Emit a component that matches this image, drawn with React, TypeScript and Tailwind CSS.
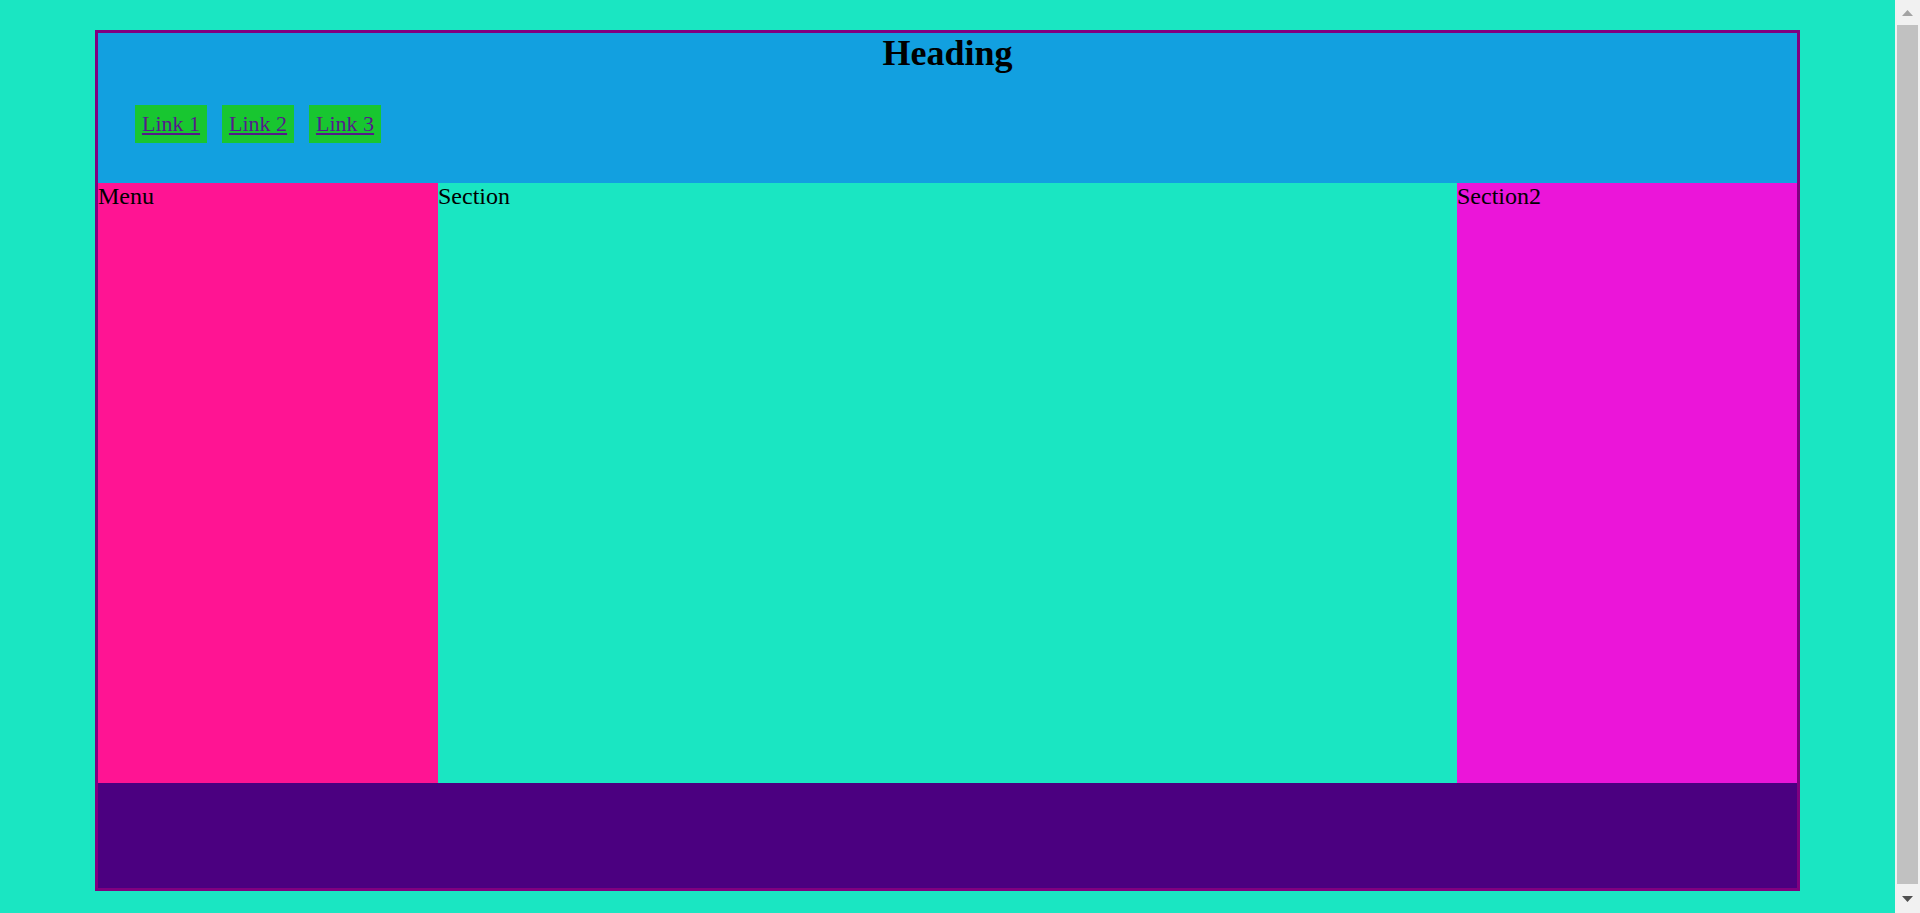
export default function App() {
  const links = ['Link 1', 'Link 2', 'Link 3'];

  return (
    <div className="min-h-screen bg-[#1ae6c2] pt-[30px] pb-[30px] font-['Liberation_Serif',serif] text-black">
      <div className="ml-[95px] w-[1705px] border-[3px] border-[#800080] flex flex-col">
        {/* header */}
        <header className="h-[150px] bg-[#12a0e0] flex flex-col">
          <h1 className="text-center text-[36px] font-bold leading-[41px]">Heading</h1>
          <nav className="mt-[31px] pl-[37px] flex gap-[15px]">
            {links.map((l) => (
              <a
                key={l}
                href="#"
                className="block w-[72px] h-[38px] leading-[38px] text-center bg-[#18c630] text-[22px] text-[#551a8b] underline"
              >
                {l}
              </a>
            ))}
          </nav>
        </header>

        {/* body */}
        <div className="h-[600px] flex text-[24px] leading-[27px]">
          <div className="w-[340px] bg-[#ff1493]">Menu</div>
          <div className="flex-1">Section</div>
          <div className="w-[340px] bg-[#eb15d9]">Section2</div>
        </div>

        {/* footer */}
        <footer className="h-[105px] bg-[#4b0080]" />
      </div>

      {/* window scrollbar */}
      <div className="fixed top-0 right-0 w-[25px] h-[913px] bg-[#f1f1f1] flex flex-col items-center">
        <div className="h-[25px] w-full flex items-center justify-center">
          <svg width="11" height="6" viewBox="0 0 11 6">
            <path d="M5.5 0 L11 6 L0 6 Z" fill="#a3a3a3" />
          </svg>
        </div>
        <div className="w-[21px] h-[859px] bg-[#c1c1c1]" />
        <div className="flex-1 w-full flex items-center justify-center">
          <svg width="11" height="6" viewBox="0 0 11 6">
            <path d="M0 0 L11 0 L5.5 6 Z" fill="#505050" />
          </svg>
        </div>
      </div>
    </div>
  );
}
